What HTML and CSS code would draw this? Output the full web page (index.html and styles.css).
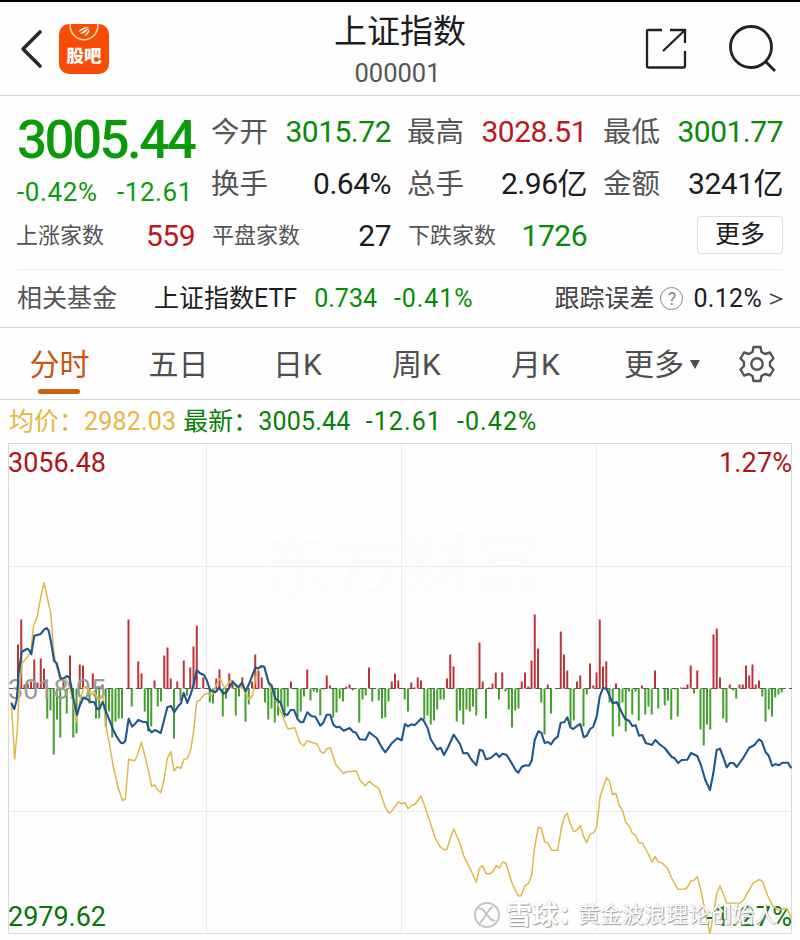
FILE: index.html
```html
<!DOCTYPE html>
<html lang="zh-CN">
<head>
    <meta charset="UTF-8">
    <title>上证指数 000001</title>
    <link rel="stylesheet" href="styles.css">
</head>
<body>
    <header class="header">
        <div class="header-left">
            <svg class="back" width="24" height="40" viewBox="0 0 24 40"><path d="M21 3L4 20L21 37"/></svg>
            <div class="guba">
                <svg width="50" height="18" viewBox="0 0 50 18">
                    <path class="arc" d="M11 0C11 21 39 21 39 0"/>
                    <path class="leaf" d="M19 8C22 4 26 3 30 3C25 5 22 7 19 8ZM21 10C24 7 27 5 30 4C28 7 25 10 21 10ZM25 12C28 9 29 7 30 5C31 8 29 11 25 12Z"/>
                </svg>
                <span>股吧</span>
            </div>
        </div>
        <div class="header-title">
            <h1>上证指数</h1>
            <p>000001</p>
        </div>
        <div class="header-right">
            <svg width="42" height="42" viewBox="0 0 42 42"><path d="M17 2H3Q2 2 2 3V38Q2 39.500 3.500 39.500H39Q40 39.500 40 38.500V23M25 2H40V15M40 2L18 23"/></svg>
            <svg class="search" width="48" height="48" viewBox="0 0 48 48"><circle cx="22" cy="22" r="20.500"/><path d="M36.500 36.500L46 46"/></svg>
        </div>
    </header>

    <section class="quote">
        <div class="price">
            <strong>3005.44</strong>
            <div class="change"><span>-0.42%</span><span>-12.61</span></div>
        </div>
        <div class="item"><label>今开</label><b class="green">3015.72</b></div>
        <div class="item"><label>最高</label><b class="red">3028.51</b></div>
        <div class="item"><label>最低</label><b class="green">3001.77</b></div>
        <div class="item"><label>换手</label><b>0.64%</b></div>
        <div class="item"><label>总手</label><b>2.96亿</b></div>
        <div class="item"><label>金额</label><b>3241亿</b></div>
        <div class="item small"><label>上涨家数</label><b class="red">559</b></div>
        <div class="item small"><label>平盘家数</label><b>27</b></div>
        <div class="item small"><label>下跌家数</label><b class="green">1726</b></div>
        <div class="item more"><button>更多</button></div>
    </section>

    <section class="fund">
        <span class="fund-label">相关基金</span>
        <span class="fund-name">上证指数ETF</span>
        <span class="fund-price green">0.734</span>
        <span class="fund-rate green">-0.41%</span>
        <div class="fund-error">
            <span>跟踪误差</span>
            <i class="help">?</i>
            <b>0.12%</b>
            <svg width="14" height="12" viewBox="0 0 14 12"><path d="M1 1L12.500 6L1 11"/></svg>
        </div>
    </section>

    <nav class="tabs">
        <a class="tab active">分时</a>
        <a class="tab">五日</a>
        <a class="tab">日K</a>
        <a class="tab">周K</a>
        <a class="tab">月K</a>
        <a class="tab tab-more">更多<i></i></a>
        <svg class="gear" width="38" height="38" viewBox="0 0 38 38">
            <path d="M15.500 2H22.500L23.500 7L27 9L32 7.500L35.500 13.500L32 17V21L35.500 24.500L32 30.500L27 29L23.500 31L22.500 36H15.500L14.500 31L11 29L6 30.500L2.500 24.500L6 21V17L2.500 13.500L6 7.500L11 9L14.500 7Z"/>
            <circle cx="19" cy="19" r="5.700"/>
        </svg>
    </nav>

    <div class="legend">
        <span class="yellow name">均价：</span><span class="yellow num">2982.03</span>
        <span class="latest name">最新：</span><span class="num">3005.44</span>
        <span class="num diff">-12.61</span><span class="num diff">-0.42%</span>
    </div>

    <div class="chart">
        <svg width="800" height="497" viewBox="0 443 800 497">
            <text class="brand" x="261" y="592" textLength="282">东方财富</text>
            <path class="grid" d="M206.500 444V933M401.500 444V933M596.500 444V933M9 566.500H792M9 811.500H792"/>
            <path class="frame" d="M8.500 443.500H791.500V933.500H8.500Z"/>
            <path class="zero" d="M9 688.500H792"/>
            <path id="up" class="up"/>
            <path id="down" class="down"/>
            <text class="mid" x="8" y="699" textLength="98">3018.05</text>
            <text class="axis axis-red" x="8" y="472" textLength="98">3056.48</text>
            <text class="axis axis-red" x="719" y="472" textLength="73">1.27%</text>
            <text class="axis axis-green" x="8" y="926" textLength="98">2979.62</text>
            <text class="axis axis-green" x="706" y="926" textLength="86">-1.27%</text>
            <polyline class="avg" points="11.3,701.7 14.7,759 17.3,730 19.3,690 22,663.3 28.3,656 31,650 33.7,625 37.3,616.7 40.7,597.3 44,582.7 47,596.7 50.7,612.7 53.3,646.7 55.3,661.7 60.3,680 64,677.3 67.7,681.7 71.7,695 76.7,721.7 80,700 84,686.7 87.3,687.3 90.7,695 94,690.7 98.3,700 102.7,695 106,726.7 109.3,743.3 113.3,766.7 118.3,788.3 122.7,800.7 125.3,799 128.7,759.3 134.7,761 137.7,754.3 141.3,742 144.3,753.3 148.7,771.7 151.7,786.3 154.7,784.7 157.3,789.3 160.7,792.7 164,780 167.3,758.3 171,751.7 174,771 177.3,766.7 180.7,768.7 184,759.3 187.3,758.7 190.7,750 193.3,733.3 196.7,701.7 200,700
                204,695 207.3,693.3 211.7,695.7 215.3,686.7 220,678.3 224.7,688.3 230.7,680 236.7,688.3 242.7,687.3 249.3,700 252.7,695 256.7,671.7 260,666.7 264.3,667.7 268.3,683.3 276,700 282.7,716.7 288,729 294.7,727.7 300,742.7 303.7,746 307.3,740.7 317.3,744.3 320.7,751.7 323.7,753.3 326.7,749 330.3,747.7 336,765 343.3,773.3 346.7,771.7 356.3,771 360,780 365.3,785.7 369.3,781.3 372.7,784.3 378.7,788.3 385.3,807.3 389.3,813.3 392.7,810 398.3,801.7 401.3,803.7
                405,802.7 408,808.7 411.3,805.7 415.3,804 421,796 424.7,806 430,821.7 435,837.7 440,846.7 444.3,850 447,849 450.3,838.3 453.7,829 460,843.3 464,856.7 470,868.3 476.3,882.3 479.3,868.3 482.7,865.7 486.3,873.7 490,873.7 493,871.7 496.3,865.7 499.3,868 502.7,862 506,863.3 512.3,884 518.3,896 521,895.7 525,885.7 528.7,883.3 531.7,875 534.7,846.7 538.3,827.3 541.3,828.3 544.7,841.7 547.7,842.7 551.7,850.3 557.7,850.3 561.3,828.3 564.7,816 567.3,813.3 570,823.3 573.7,831.7 577,830 580.3,825.7 583.7,836.7 586.7,842.7 590,834.3 594,832.3 596.7,826.7 600,797.3
                603.3,786.7 606.7,777.7 609.3,780.7 612.7,794.7 616,793.3 619.3,806 622.7,810.7 625.7,822.3 629.3,826 632.3,833.3 635.7,835.3 639,842.7 642.3,843 648.3,854 652,862 655.3,856.7 658.3,862 662,862.7 668,869.3 671.7,878.3 678,889.3 684.7,889 687.3,887.7 691,880.7 694,880.3 697.3,876.7 701.3,891.7 705,911.7 710,933.3 712.7,918.3 716.7,893.3 720,885.7 723.3,894 726.7,903 740,903.3 744,899.3 752.7,883.7 759.3,879.3 762.7,881.7 767.3,895 772.7,905.7 778.3,910 786.7,908.3 791.7,918.3"/>
            <polyline class="line" points="11.3,703 14.3,709 16.7,700 18.7,673 21.7,651.7 27.3,648.7 29,650 31.3,654.3 34.3,635.7 40.7,634 44,629.7 46.7,628 48.7,630.7 51,641.7 54,660.7 56.7,663.3 60.7,678.7 64,678.3 66.7,676 69.3,677.3 71,685 73.3,698.3 77,714.7 80,705 83.3,697.7 87.3,699.3 90,701.7 94.3,702.3 97.3,709 99.3,709 102.7,702 106,711.7 110,721.7 113.3,730 116.7,736.7 120.7,742.7 123,743.3 125.3,741 128.7,718.7 132,726.7 134.7,724.3 138.3,720 142.7,721.7 146.7,722.3 149,729.3 151.7,732.3 155,730 160.7,733 163.3,723.3 167.3,707.3 171,706 174.3,712.3 178.3,706 181,703.3 183.7,692.7 187.3,703 191,693.3 194,683.3 196.7,670 200,673.3
                204,675 206.7,680 210,690 215.3,692.3 219.3,687.7 223.3,693.7 226.7,692 232.7,681.7 238.3,687.3 242,682.7 245.7,691.3 250,681.7 255.3,667.7 258,668.3 261.7,666 264.3,666.7 268.7,682.7 271.7,685.7 275.3,698.3 280.7,702.7 284,714 287.3,715 290.7,710 294,710 297.7,719.3 300.7,722.3 303.3,722 307.3,712.3 311.3,716 315.3,716.7 320.3,725.7 323.3,722.7 326.7,714.7 330.3,714.7 333.3,724.7 336.7,727.3 339.3,726.7 343.7,730.7 349.7,728 353,731.7 356,732.7 359.7,739.3 365.7,739.7 369.3,732.3 372.7,735 376.7,738 381.7,747.3 385.3,752.3 391.7,743.3 397.3,738.3 401.7,740.3
                405,724 408,726.3 411.3,724.3 414.7,725.3 421,718.7 423.3,720 427.7,728.3 430.7,739.3 437.3,749.7 440.7,747.7 444,755 448.3,746.7 453.7,734.7 460,744 463.3,753.3 467.3,753 471.7,760 476.3,765.3 479.7,749.7 482.7,750.7 486,759.3 490.7,758 496.3,753.3 499.3,757 502.7,753.7 506.7,755 511.7,763.3 516,770.7 518.3,772.7 521.7,767 525.3,765.3 529,765.7 531.7,760.7 534.7,740 538.3,731.3 541.3,732.7 544.7,743 548,742 551,744.3 554.3,739.3 557.7,736.7 560.7,722.7 564.3,722.3 567.3,717.3 570.3,727.3 573.3,729 577,726 580.3,724 583.7,737.3 586.7,735.7 590,729.3 593.3,726.7 596.7,716.7 599.7,696.7 603,688 606.3,688.7
                607.3,690.7 612.7,703.3 616.7,702 620,708.7 625,718.7 629.3,721 632.3,726 635.7,725.3 639,735.7 642.3,735 645.7,743 652,745 655.3,740 660,744.7 664.7,748 671.7,757 674.7,758.3 678,763 681.7,760 687.3,759.7 691,753 697.3,756 700.7,764.3 705.3,780 710,790 713.3,773.3 716.7,750 720,748.7 723.3,757.3 726.7,767.3 730,763 733.3,763 736.7,767 742.7,758.7 749.3,747.7 754,745.3 759,739.3 761.7,741.3 765.7,752.3 768.7,755.7 772.3,766 775.3,764 778.7,765.3 782.7,762.7 788,762.7 791.3,768.3"/>
        </svg>
        <div class="watermark">
            <svg width="28" height="28" viewBox="0 0 28 28"><circle cx="14" cy="14" r="12"/><path d="M6 8C10 6 12 12 14 14C17 17 19 21 22 19M20 6C14 8 13 17 7 22"/></svg>
            <span class="site">雪球：</span><span>黄金波浪理论创始人</span>
        </div>
    </div>

    <script>
        // one bar per minute, positive is up
        const bars = [
            44, 69, 4, 5, 7, 29, 6, 30, 20, -30, -22, -66, -31, -49, 7, -25, 33, -49, -45, 24,
            23, 2, -15, 15, -30, -30, 4, -38, -23, -49, -33, -30, -30, 0, 69, -18, 0, 27, 15, -23,
            -43, -38, 8, -18, -13, 33, 41, 10, -50, 7, -12, 28, -7, 21, 42, 63, 0, 11, 0, -14,
            -15, 10, 19, -28, -10, 15, 8, -27, -8, 11, -33, -16, 7, 34, 18, 11, -14, -31, -20, -34,
            -27, -18, -29, -18, 7, -1, -29, -23, -8, 19, -12, -3, -4, -27, -1, 13, 3, -29, -24, -10,
            -13, 2, 4, -2, 0, -34, -11, -7, 21, -13, 0, -12, -30, -29, -13, 7, 15, 8, 0, -11,
            -23, 6, 1, 11, 8, -31, -27, -36, -32, -21, -11, -11, 10, 34, 22, -33, -22, -36, -21, -23,
            -18, -27, 46, 7, -30, 1, 5, 16, -11, 16, -3, -21, -39, -22, -20, 7, 16, 2, 28, 74,
            40, -14, -46, 4, -25, 0, 0, 57, 34, 18, -38, -32, 7, 13, -38, -6, 25, 3, 16, 69,
            22, 27, -14, -48, 5, -38, -14, -43, -3, -26, -3, -32, 3, -26, -18, -26, 18, -20, 0, -17,
            -12, -31, -1, -28, 1, 1, 4, 23, -5, 18, -41, -57, -36, -41, 54, 60, 11, -30, -34, 4,
            -2, -10, 4, 4, 23, 13, 24, 4, 8, -8, -33, -21, -28, -9, -6, -4, 0, 0
        ];
        let up = "";
        let down = "";
        bars.forEach((v, i) => {
            const d = `M${18 + i * 3.25} 688.500v${-v}`;
            if (v > 0) up += d;
            if (v < 0) down += d;
        });
        document.getElementById("up").setAttribute("d", up);
        document.getElementById("down").setAttribute("d", down);
    </script>
</body>
</html>
```
FILE: styles.css
```css
* {
    box-sizing: border-box;
}
body {
    margin: 0;
    width: 800px;
    height: 940px;
    overflow: hidden;
    background-color: #fefefe;
    color: #1c1c1e;
    font-family: Roboto, "Noto Sans CJK SC", sans-serif;
}
b, i {
    font-weight: normal;
    font-style: normal;
}
svg {
    display: block;
    fill: none;
}
.green {
    color: #078a07;
}
.red {
    color: #b9181e;
}
.header {
    display: flex;
    justify-content: space-between;
    height: 96px;
    border-top: 2px solid #000;
    border-bottom: 1px solid #d9d9d9;
    padding: 0 23px 0 19px;
}
.header-left, .header-right {
    display: flex;
    align-items: center;
    width: 240px;
}
.header-left {
    gap: 16px;
}
.header-right {
    justify-content: flex-end;
    gap: 42px;
}
.back path {
    stroke: #29292c;
    stroke-width: 3.6;
    stroke-linecap: round;
    stroke-linejoin: round;
}
.guba {
    width: 50px;
    height: 50px;
    border-radius: 10px;
    background-color: #fa4b05;
    overflow: hidden;
    color: #fff;
    font-size: 17.5px;
    font-weight: 900;
    line-height: 28px;
    text-align: center;
}
.arc {
    stroke: #ffe0bd;
    stroke-width: 1.5;
}
.leaf {
    fill: #fff;
}
.header-title {
    padding-left: 4px;
    text-align: center;
}
.header-title h1 {
    margin: 7px 0 0;
    font-size: 33px;
    font-weight: normal;
    line-height: 46px;
}
.header-title p {
    margin: 3px 0 0 -5px;
    color: #555;
    font-size: 25.5px;
    line-height: 30px;
}
.header-right svg {
    stroke: #222;
    stroke-width: 2.3;
}
.header-right .search {
    stroke-width: 2.8;
}
.quote {
    display: grid;
    grid-template-columns: repeat(4, 1fr);
    grid-template-rows: repeat(3, 52px);
    column-gap: 18px;
    margin: 0 17px;
    padding: 10px 0 6px;
    height: 174px;
    border-bottom: 1px solid #eee;
}
.price {
    grid-row: span 2;
    color: #0a9b0a;
}
.price strong {
    display: block;
    margin-top: 6px;
    font-size: 53px;
    font-weight: 500;
    line-height: 56px;
    letter-spacing: -2.6px;
}
.change {
    display: flex;
    justify-content: space-between;
    margin: 7px 2px 0 0;
    font-size: 26px;
    line-height: 34px;
    letter-spacing: 0.6px;
}
.item {
    display: flex;
    justify-content: space-between;
    align-items: center;
    white-space: nowrap;
}
.item label {
    margin-left: -2px;
    padding-top: 2px;
    color: #555;
    font-size: 28.5px;
    line-height: 40px;
}
.item b {
    font-size: 30px;
    line-height: 40px;
    letter-spacing: -0.5px;
}
.item.small label {
    margin-left: -1px;
    padding-top: 0;
    font-size: 22px;
}
.item.more {
    justify-content: flex-end;
}
.more button {
    width: 86px;
    height: 38px;
    padding: 0;
    border: 1px solid #ddd;
    border-radius: 4px;
    background-color: #fff;
    color: #1c1c1e;
    font-family: inherit;
    font-size: 25px;
    line-height: 32px;
    margin-bottom: 3px;
}
.fund {
    display: flex;
    align-items: center;
    height: 57px;
    padding: 0 17px;
    font-size: 25px;
    white-space: nowrap;
}
.fund-label {
    width: 137px;
    padding-bottom: 5px;
    color: #555;
}
.fund-name {
    padding-bottom: 5px;
}
.fund-price {
    margin: 0 17px;
}
.fund-rate {
    letter-spacing: 0.9px;
}
.fund-error {
    display: flex;
    align-items: center;
    margin-left: auto;
}
.fund-error span {
    padding-bottom: 5px;
    color: #444;
}
.fund-error b {
    letter-spacing: 0.3px;
}
.help {
    width: 23px;
    height: 23px;
    margin: 0 10px 0 6px;
    border: 1.5px solid #888;
    border-radius: 50%;
    color: #888;
    font-size: 18px;
    line-height: 21px;
    text-align: center;
}
.fund-error svg {
    margin-left: 7px;
    stroke: #444;
    stroke-width: 1.6;
}
.tabs {
    display: flex;
    align-items: center;
    height: 73px;
    border-top: 1px solid #d9d9d9;
    border-bottom: 1px solid #d9d9d9;
    margin-bottom: -1px;
}
.tab {
    position: relative;
    width: 119px;
    padding-top: 2px;
    color: #4f4f4f;
    font-size: 30px;
    line-height: 68px;
    text-align: center;
}
.active {
    color: #c4560f;
}
.active::after {
    content: "";
    position: absolute;
    left: 38px;
    bottom: 5px;
    width: 42px;
    height: 5px;
    border-radius: 3px;
    background-color: #cb600f;
}
.tab-more {
    display: flex;
    align-items: center;
    justify-content: center;
    gap: 6px;
    width: 134px;
}
.tab-more i {
    border: 5.5px solid transparent;
    border-top: 9px solid #4f4f4f;
    border-bottom: 0;
}
.gear {
    margin-left: 9px;
    stroke: #555;
    stroke-width: 2.4;
    stroke-linejoin: round;
}
.legend {
    display: flex;
    align-items: center;
    height: 44px;
    padding-left: 9px;
    color: #078007;
    font-size: 25px;
    white-space: nowrap;
}
.name {
    padding-bottom: 4px;
}
.num {
    letter-spacing: 0.2px;
}
.yellow {
    color: #e6b740;
}
.latest {
    margin-left: 7px;
}
.diff {
    margin-left: 15px;
    letter-spacing: 1.1px;
}
.chart {
    position: relative;
}
.grid {
    stroke: #ebebeb;
}
.frame {
    stroke: #d8dcdc;
}
.zero {
    stroke: #555;
    stroke-dasharray: 6.500 3.250;
}
.up, .down {
    stroke-width: 2;
}
.up {
    stroke: #bb343a;
}
.down {
    stroke: #43a02c;
}
.avg {
    stroke: #ddb94a;
    stroke-width: 1.5;
    stroke-linejoin: round;
}
.line {
    stroke: #20568c;
    stroke-width: 2.1;
    stroke-linejoin: round;
}
.axis, .mid {
    font-size: 27px;
}
.axis-red {
    fill: #b0141a;
}
.axis-green {
    fill: #077507;
}
.mid {
    fill: #9a9a9a;
}
.brand {
    fill: #fefbfc;
    font-size: 70px;
    font-weight: 900;
}
.watermark {
    position: absolute;
    left: 473px;
    top: 457px;
    display: flex;
    align-items: center;
    color: #fff;
    font-size: 22px;
    line-height: 30px;
    white-space: nowrap;
    text-shadow: 1px 1px 1px #999, 0 0 1px #aaa;
}
.watermark .site {
    width: 72px;
    margin-left: 5px;
    font-size: 26px;
    font-weight: bold;
}
.watermark svg {
    stroke: #c4c4c4;
    stroke-width: 2;
}
```
